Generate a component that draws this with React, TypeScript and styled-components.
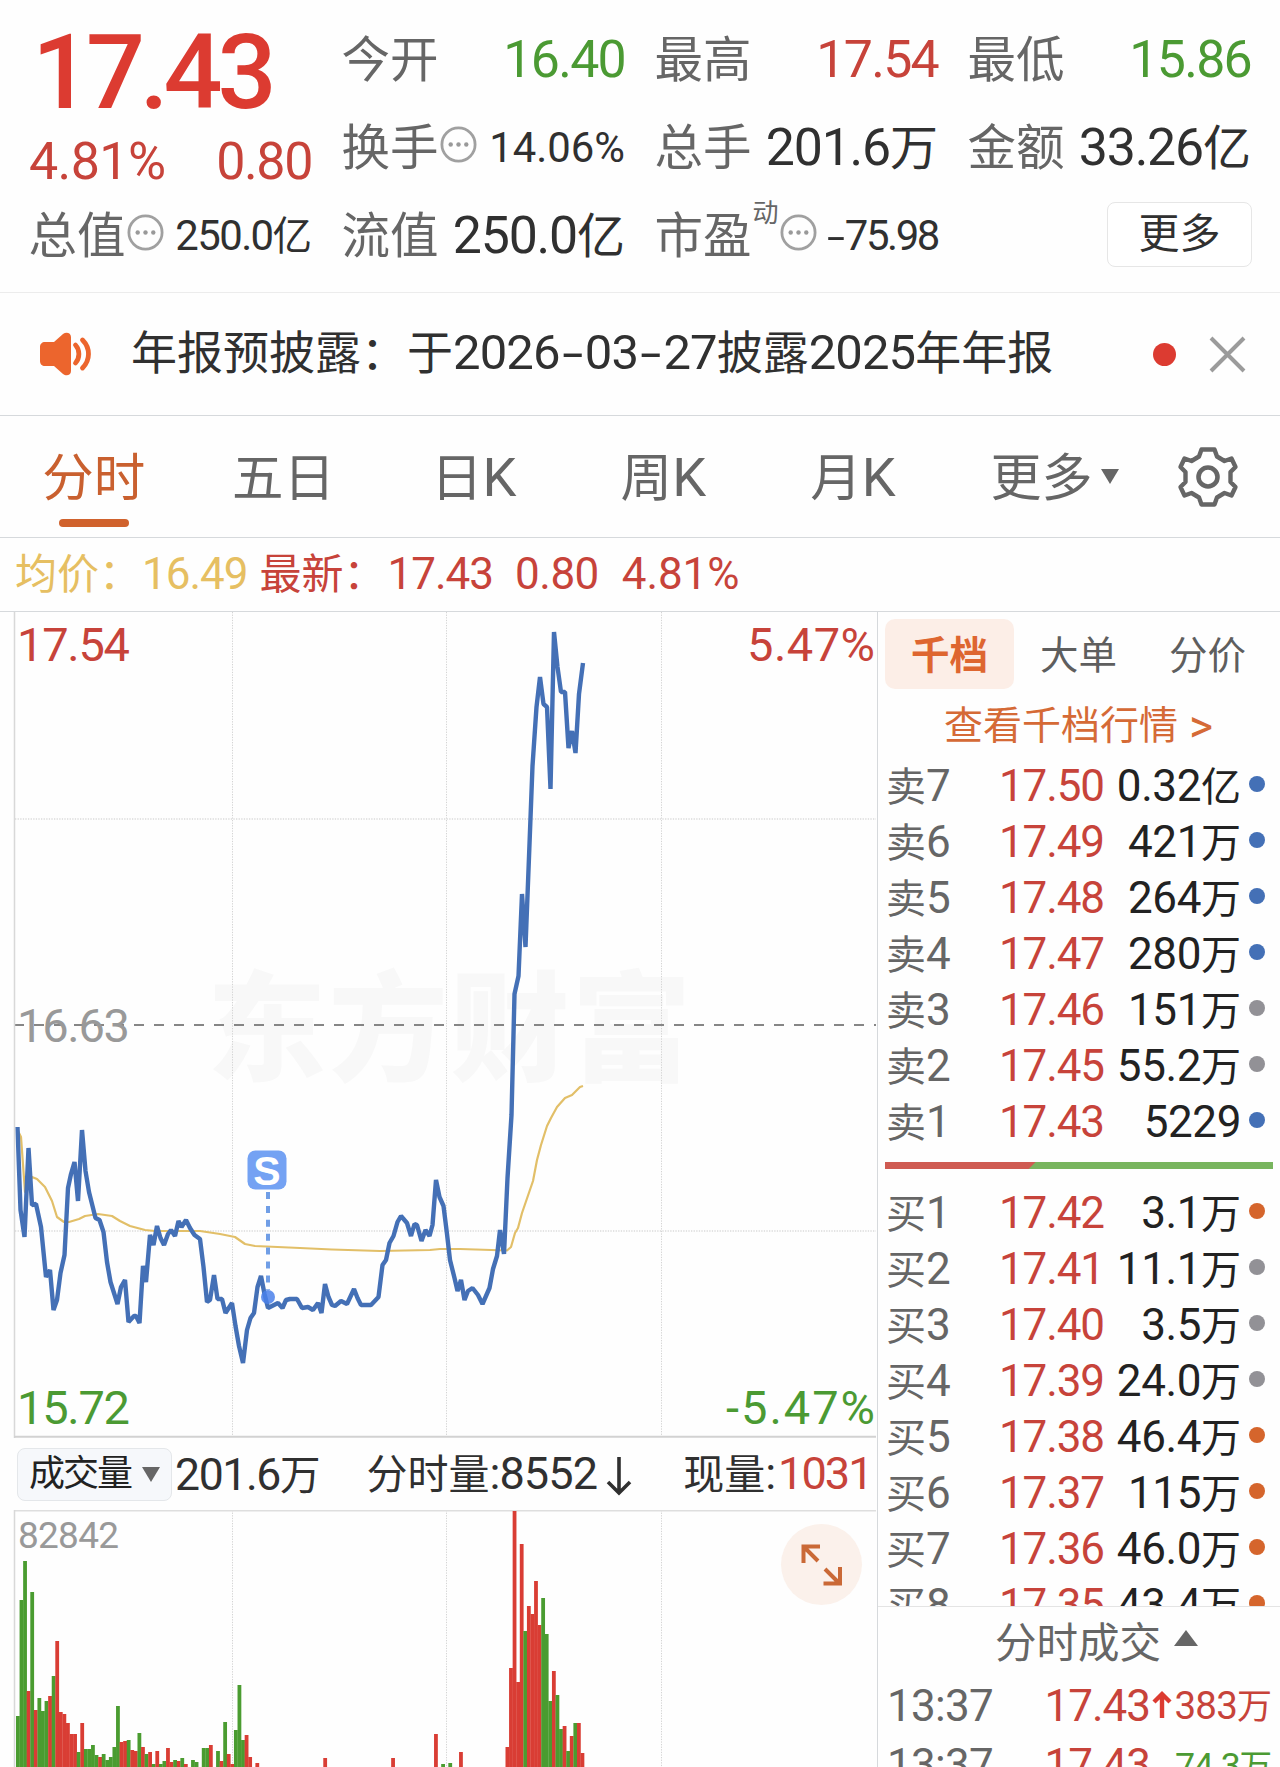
import React from "react";
import styled, { createGlobalStyle } from "styled-components";

const color = {
  red: "#c7433a",
  strongRed: "#dc3b31",
  green: "#4b9a33",
  orange: "#d0622d",
  yellow: "#e6bf62",
  blue: "#4470b6",
  grey: "#666666",
  light: "#999999",
  dark: "#303030",
  ink: "#222222",
  line: "#d6d9dc",
};

const GlobalStyle = createGlobalStyle`
  * { box-sizing: border-box; }
  body {
    margin: 0;
    background: #fefefe;
    overflow: hidden;
    font-family: Roboto, "Noto Sans CJK SC", sans-serif;
  }
`;

const Page = styled.div`
  width: 1280px;
  height: 1767px;
  overflow: hidden;
  display: flex;
  flex-direction: column;
  background: #fefefe;
`;

const Text = styled.span<{ $size: number; $color?: string; $spacing?: number; $left?: number }>`
  font-size: ${(p) => p.$size}px;
  line-height: 1.2;
  white-space: pre;
  color: ${(p) => p.$color ?? color.dark};
  letter-spacing: ${(p) => p.$spacing ?? 0}px;
  margin-left: ${(p) => p.$left ?? 0}px;
`;

const Latin = styled.span<{ $ratio: number; $tracking: number }>`
  font-size: ${(p) => p.$ratio}em;
  line-height: 1;
  letter-spacing: ${(p) => p.$tracking}px;
`;

const Hyphen = styled.span<{ $width: number }>`
  display: inline-block;
  width: ${(p) => p.$width}em;
  line-height: 1;
  letter-spacing: 0;
  text-align: center;
  transform: scaleX(1.65);
`;

type MixedProps = React.ComponentProps<typeof Text> & {
  value: string;
  ratio?: number;
  tracking?: number;
  hyphen?: number;
};

/** Chinese text whose figures and letters are set slightly larger than the ideographs. */
function Mixed({ value, ratio = 1.08, tracking = 0, hyphen = 0.54, ...rest }: MixedProps) {
  return (
    <Text {...rest}>
      {value.split(/([0-9A-Za-z.%:]+|-)/).map((part, i) => {
        if (part === "-") return <Hyphen key={i} $width={hyphen}>-</Hyphen>;
        if (i % 2) return <Latin key={i} $ratio={ratio} $tracking={tracking}>{part}</Latin>;
        return part;
      })}
    </Text>
  );
}

/* ---------- quote header ---------- */

const Header = styled.header`
  height: 293px;
  flex: none;
  display: grid;
  grid-template-columns: repeat(4, 282px);
  grid-template-rows: repeat(3, 88px);
  column-gap: 31px;
  padding: 14px 28px 14px 30px;
  border-bottom: 1px solid #ececec;
`;

const Cell = styled.div`
  display: flex;
  align-items: center;
  justify-content: space-between;
  padding-top: 6px;
`;

const Name = styled.div`
  display: flex;
  align-items: center;
  margin-left: -1.5px;
`;

const PriceCell = styled.div`
  grid-row: span 2;
  display: flex;
  flex-direction: column;
`;

const BigPrice = styled.div`
  height: 117px;
  padding-left: 2px;
  font-size: 104px;
  line-height: 117px;
  font-weight: 500;
  letter-spacing: -5.2px;
  color: ${color.strongRed};
`;

const ChangeRow = styled.div`
  display: flex;
  justify-content: space-between;
  align-items: center;
`;

const Superscript = styled.span`
  align-self: flex-start;
  margin: -10px 0 0 1px;
  font-size: 26px;
  line-height: 30px;
  color: ${color.grey};
`;

const MoreButton = styled.button`
  justify-self: end;
  align-self: center;
  width: 145px;
  height: 65px;
  margin-right: -1px;
  padding: 0;
  border: 1.5px solid #e6e6e6;
  border-radius: 8px;
  background: #fff;
  font: 41px/1 Roboto, "Noto Sans CJK SC", sans-serif;
  color: ${color.dark};
`;

const DotsSvg = styled.svg`
  margin: -10px 0 0 1px;
`;

function Dots() {
  return (
    <DotsSvg width="37" height="37" viewBox="0 0 37 37">
      <circle cx="18.5" cy="18.5" r="16.6" fill="none" stroke="#a0a0a0" strokeWidth="2.8" />
      <circle cx="10.7" cy="18.5" r="2.2" fill="#999" />
      <circle cx="18.5" cy="18.5" r="2.2" fill="#999" />
      <circle cx="26.3" cy="18.5" r="2.2" fill="#999" />
    </DotsSvg>
  );
}

interface StatProps {
  name: string;
  value: string;
  tone?: string;
  info?: boolean;
  sup?: string;
  tracking?: number;
}

function Stat({ name, value, tone = color.dark, info, sup, tracking = -1.2 }: StatProps) {
  return (
    <Cell>
      <Name>
        <Text $size={48.5} $color={color.grey}>{name}</Text>
        {sup && <Superscript>{sup}</Superscript>}
        {info && <Dots />}
      </Name>
      <Mixed
        value={value}
        ratio={info ? 1.06 : 1.08}
        tracking={tracking}
        hyphen={0.46}
        $size={info ? 39.5 : 48}
        $color={tone}
      />
    </Cell>
  );
}

/* ---------- notice ---------- */

const Notice = styled.div`
  height: 123px;
  flex: none;
  display: flex;
  align-items: center;
  padding: 0 34px 0 38px;
  border-bottom: 1.5px solid ${color.line};
`;

const NoticeText = styled.div`
  flex: 1;
  padding-left: 37px;
`;

const RedDot = styled.span`
  width: 23px;
  height: 23px;
  margin-right: 33px;
  border-radius: 50%;
  background: ${color.strongRed};
`;

/* ---------- period tabs ---------- */

const Tabs = styled.nav`
  height: 122px;
  flex: none;
  display: grid;
  grid-template-columns: repeat(5, 189.6px) 222px 1fr;
  border-bottom: 1.5px solid ${color.line};
`;

const Tab = styled.div<{ $active?: boolean }>`
  position: relative;
  display: flex;
  align-items: center;
  justify-content: center;
  padding: 5px 2px 0 0;
  &::after {
    content: "";
    display: ${(p) => (p.$active ? "block" : "none")};
    position: absolute;
    left: 59px;
    bottom: 10px;
    width: 70px;
    height: 8px;
    border-radius: 4px;
    background: ${color.orange};
  }
`;

const SettingsTab = styled.div`
  display: flex;
  align-items: center;
  padding-left: 6px;
`;

const Down = styled.i<{ $left: number; $lift?: number }>`
  margin-left: ${(p) => p.$left}px;
  margin-top: ${(p) => -(p.$lift ?? 0)}px;
  border: 9px solid transparent;
  border-bottom: 0;
  border-top: 15px solid ${color.grey};
`;

const Up = styled.i`
  margin: -12px 0 0 13px;
  border: 12px solid transparent;
  border-top: 0;
  border-bottom: 16px solid ${color.grey};
`;

/* ---------- average / latest ---------- */

const Summary = styled.div`
  height: 74px;
  flex: none;
  display: flex;
  align-items: baseline;
  padding: 10px 0 0 15px;
  border-bottom: 1.5px solid ${color.line};
`;

/* ---------- body ---------- */

const Body = styled.main`
  flex: 1;
  min-height: 0;
  display: flex;
`;

const Charts = styled.section`
  width: 878px;
  flex: none;
  border-right: 1.5px solid ${color.line};
  display: flex;
  flex-direction: column;
`;

const Plot = styled.svg`
  display: block;
  flex: none;
`;

const VolumeBar = styled.div`
  height: 72px;
  flex: none;
  display: flex;
  align-items: center;
  padding-left: 17px;
`;

const Figures = styled.div`
  display: flex;
  align-items: center;
  padding-top: 4px;
`;

const Chip = styled.div`
  width: 155px;
  height: 53px;
  display: flex;
  align-items: center;
  padding: 1px 0 0 11px;
  border: 1.5px solid #e4e7ea;
  border-radius: 8px;
  background: #f6f8fb;
`;

const VolumePane = styled.div`
  position: relative;
`;

const Expand = styled.button`
  position: absolute;
  left: 781px;
  top: 14px;
  width: 81px;
  height: 81px;
  padding: 0;
  border: 0;
  border-radius: 50%;
  background: #fbf1eb;
`;

const PRICE =
  "17.5,1127 20.5,1210 24.5,1237 28.5,1148 32,1205 36,1204 41,1227 46,1277 50,1270 53.5,1310 57,1300 60.5,1273 64.5,1255 68,1188 71,1174 74.5,1162 78,1201 82,1130 85.5,1171 89,1192 95.5,1218 99.5,1220 103.5,1232 107,1262 110.5,1282 117.5,1304 121,1287 125,1280 128.5,1322 134,1316 136,1316 139.5,1323 143,1266 146,1282 150,1235 153.5,1245 157,1226 160.5,1238 164,1245 168,1234 171,1230 175,1236 178.5,1221 181.5,1227 186,1220 190,1228 194.5,1235 200,1239 203.5,1267 207,1302 210,1300 214,1275 217.5,1299 222,1299 225.5,1313 232,1303 235.5,1326 239,1346 243,1363 247,1330 250.5,1318 254,1313 257.5,1287 261,1276 264.5,1294 268,1308 272,1306 278,1303 282.5,1308 286,1300 290,1299 297,1299 302,1308 308,1307 313,1310 318,1303 321.5,1313 325,1284 328.5,1297 332,1305 335,1306 341,1301 347,1304 354,1289 357.5,1298 361,1305 371,1305 378.5,1297 382.5,1265 386,1260 389.5,1243 393.5,1236 397.5,1222 401,1216 407,1223 411,1236 414.5,1224 417,1225 421.5,1241 425.5,1230 429.5,1236 432.5,1225 436,1180 439.5,1197 443.5,1206 447,1234 450,1260 454.5,1278 457.5,1291 461,1280 464.5,1300 468,1291 472.5,1288 478,1295 482.5,1304 489.5,1288 493,1269 497,1256 500,1230 504,1254 507.5,1178 511.5,1115 514.5,994 518.5,976 522,894 525.5,947 529,857 532.5,766 536.5,707 540,677 543.5,704 547,707 550.5,789 554,632 557.5,667 561,692 565,692 568.5,748 572,731 575.5,753 579,694 583,663";

const AVERAGE =
  "17.5,1130 21,1137 25,1192 32,1177 37,1179 45,1187 52,1201 57,1217 64,1222 69,1222 79,1219 85,1216 98,1214 112,1216 120,1221 130,1226 145,1230 155,1231 200,1231 220,1234 235,1237 245,1244 255,1246 300,1248 332,1249.5 380,1251 430,1250 440,1249 460,1249 507,1250.5 511,1247 515,1233 518,1228 522,1213 533,1181 537,1160 541,1145 547,1126 551,1118 557,1107 565,1098 572,1095 580,1087 583,1086";

/* one entry per minute: g = falling / r = rising, then the height above the bottom edge */
const OPENING =
  "g51 g167 g206 r76 g175 r57 g69 g56 g66 r71 g91 r126 r55 r53 r44 r33 r33 g15 r44 g18 g18 g22 g12 r10 g13 g7 g10 g20 g61 r25 r26 g27 r17 r16 g34 r20 g13 r15 g3 r16 g3 g6 r19 r5 g7 r6 g9 r3 - g7 g5 - g19 g19 r22 - g16 r6 g45 r13 r3 g37 g82 g27 r32 r10 - r4";
const SURGE =
  "r20 r99 r256 r85 r223 g136 r161 r153 r186 r142 g169 g133 g66 r96 g72 g38 r41 g16 r31 g44 r44 r14";

const expandBars = (source: string, start: number) =>
  source
    .split(" ")
    .map((s, i) => ({ slot: start + i, tone: s[0], height: Number(s.slice(1)) || 0 }))
    .filter((b) => b.height > 0);

const BARS = [
  ...expandBars(OPENING, 0),
  { slot: 86, tone: "r", height: 9 },
  { slot: 105, tone: "r", height: 9 },
  { slot: 117, tone: "r", height: 33 },
  { slot: 119, tone: "g", height: 3 },
  { slot: 121, tone: "g", height: 4 },
  { slot: 124, tone: "r", height: 15 },
  ...expandBars(SURGE, 137),
];

function GridLines({ top, bottom }: { top: number; bottom: number }) {
  return (
    <g stroke="#d4d4d4" strokeWidth="1" strokeDasharray="1.3 1.3">
      {[232.5, 446.5, 661.5].map((x) => (
        <line key={x} x1={x} x2={x} y1={top} y2={bottom} />
      ))}
    </g>
  );
}

function PriceChart() {
  return (
    <Plot width="877" height="826" viewBox="0 612 877 826" fontFamily="Roboto, sans-serif" fontSize="47">
      <text
        x="207"
        y="1072"
        fontSize="119"
        fontWeight="900"
        fontFamily='"Noto Sans CJK SC", sans-serif'
        fill="#f8f8f8"
        textLength="484"
      >
        东方财富
      </text>
      <GridLines top={612} bottom={1437} />
      <g stroke="#dadada" strokeWidth="1.5" strokeDasharray="1.3 1.3">
        <line x1="15" x2="876" y1="819" y2="819" />
        <line x1="15" x2="876" y1="1231" y2="1231" />
      </g>
      <line x1="14" x2="876" y1="1025" y2="1025" stroke="#868686" strokeWidth="2" strokeDasharray="10 10" />
      <text x="17" y="1042" fill={color.light} textLength="113">16.63</text>
      <polyline points={AVERAGE} fill="none" stroke="#e2bf68" strokeWidth="2.2" strokeLinejoin="round" />
      <polyline points={PRICE} fill="none" stroke={color.blue} strokeWidth="4.4" strokeLinejoin="bevel" />
      <line x1="268" x2="268" y1="1192" y2="1290" stroke="#709ee6" strokeWidth="4" strokeDasharray="7 6.9" />
      <circle cx="268" cy="1297" r="7" fill="#4a80ea" opacity="0.85" />
      <rect x="247.5" y="1150.5" width="39" height="39" rx="8" fill="#74a2f3" />
      <text x="267" y="1185" fontSize="41" fontWeight="700" fill="#fff" textAnchor="middle" fontFamily='"Liberation Sans", sans-serif'>
        S
      </text>
      <text x="17" y="661" fill={color.red} textLength="113">17.54</text>
      <text x="747" y="661" fill={color.red} textLength="128">5.47%</text>
      <text x="17" y="1424" fill={color.green} textLength="113">15.72</text>
      <text x="726" y="1424" fill={color.green} textLength="149">-5.47%</text>
      <line x1="14.5" x2="14.5" y1="612" y2="1438" stroke="#d8d8d8" strokeWidth="1.5" />
      <line x1="14" x2="876" y1="1436.8" y2="1436.8" stroke="#d2d2d2" strokeWidth="2" />
    </Plot>
  );
}

function VolumeChart() {
  return (
    <Plot width="877" height="257" viewBox="0 0 877 257" fontFamily="Roboto, sans-serif">
      <GridLines top={0} bottom={257} />
      <line x1="14" x2="876" y1="0.7" y2="0.7" stroke="#dedede" strokeWidth="1.4" />
      <line x1="14.5" x2="14.5" y1="0" y2="257" stroke="#d8d8d8" strokeWidth="1.5" />
      <text x="18" y="38" fontSize="37" fill={color.light} textLength="101">82842</text>
      {BARS.map((b) => (
        <rect
          key={b.slot}
          x={16 + b.slot * 3.573}
          y={257 - b.height}
          width="3.8"
          height={b.height}
          fill={b.tone === "g" ? "#4a9c30" : "#d93d34"}
        />
      ))}
    </Plot>
  );
}

/* ---------- order book ---------- */

const Side = styled.aside`
  flex: 1;
  min-width: 0;
  display: flex;
  flex-direction: column;
`;

const SideTabs = styled.div`
  height: 77px;
  flex: none;
  display: flex;
  align-items: flex-start;
  padding: 7px 0 0 7px;
`;

const SideTab = styled.div<{ $active?: boolean }>`
  width: 129px;
  height: 70px;
  display: flex;
  align-items: center;
  justify-content: center;
  padding-top: 4px;
  border-radius: 10px;
  font-size: 38.5px;
  line-height: 1;
  font-weight: ${(p) => (p.$active ? 700 : 400)};
  color: ${(p) => (p.$active ? "#de6630" : "#5e5e5e")};
  background: ${(p) => (p.$active ? "#fceee7" : "transparent")};
`;

const DepthLink = styled.div`
  height: 67px;
  flex: none;
  display: flex;
  align-items: center;
  padding: 8px 0 0 66px;
`;

const Book = styled.div`
  height: 851px;
  flex: none;
  overflow: hidden;
  border-bottom: 1.5px solid #e4e4e4;
`;

const BookRow = styled.div`
  height: 56px;
  display: grid;
  grid-template-columns: 96px 122px 1fr 16px;
  align-items: center;
  padding: 0 15px 0 8px;
`;

const BookText = styled.div<{ $end?: boolean; $gap?: number }>`
  display: flex;
  justify-content: ${(p) => (p.$end ? "flex-end" : "flex-start")};
  padding: 7px ${(p) => p.$gap ?? 0}px 0 0;
`;

const Dot = styled.span<{ $tone: string }>`
  width: 16px;
  height: 16px;
  border-radius: 50%;
  background: ${(p) => p.$tone};
`;

const Ratio = styled.div`
  height: 7px;
  margin: 14px 7px;
  background: linear-gradient(135deg, #cf5b52 0 106px, #78b55e 107px);
`;

const B = color.blue;
const G = "#929196";
const O = "#d5652c";

type LevelRow = [name: string, price: string, amount: string, tone: string];

const SELLS: LevelRow[] = [
  ["卖7", "17.50", "0.32亿", B],
  ["卖6", "17.49", "421万", B],
  ["卖5", "17.48", "264万", B],
  ["卖4", "17.47", "280万", B],
  ["卖3", "17.46", "151万", G],
  ["卖2", "17.45", "55.2万", G],
  ["卖1", "17.43", "5229", B],
];

const BUYS: LevelRow[] = [
  ["买1", "17.42", "3.1万", O],
  ["买2", "17.41", "11.1万", G],
  ["买3", "17.40", "3.5万", G],
  ["买4", "17.39", "24.0万", G],
  ["买5", "17.38", "46.4万", O],
  ["买6", "17.37", "115万", O],
  ["买7", "17.36", "46.0万", O],
  ["买8", "17.35", "43.4万", O],
];

function Level({ row: [name, price, amount, tone] }: { row: LevelRow }) {
  return (
    <BookRow>
      <BookText>
        <Mixed value={name} ratio={1.1} $size={40} $color={color.grey} />
      </BookText>
      <BookText $end>
        <Mixed value={price} ratio={1.1} tracking={-1.1} $size={40} $color={color.red} />
      </BookText>
      <BookText $end $gap={8}>
        <Mixed value={amount} ratio={1.1} tracking={-0.4} $size={40} $color={color.ink} />
      </BookText>
      <Dot $tone={tone} />
    </BookRow>
  );
}

const TradesTitle = styled.div`
  height: 67px;
  flex: none;
  display: flex;
  align-items: center;
  padding: 6px 0 0 117px;
`;

const Trade = styled.div`
  height: 59px;
  flex: none;
  display: grid;
  grid-template-columns: 143px 120px 22px 1fr;
  align-items: center;
  padding: 0 8px 0 9px;
`;

const TradeText = styled.div<{ $end?: boolean; $drop?: number }>`
  display: flex;
  min-width: 0;
  justify-content: ${(p) => (p.$end ? "flex-end" : "flex-start")};
  padding-top: ${(p) => p.$drop ?? 5}px;
`;

function TickUp() {
  return (
    <svg width="22" height="30" viewBox="0 0 22 30">
      <path d="M12 29V5M4 13l8-8 8 8" fill="none" stroke={color.strongRed} strokeWidth="4.4" />
    </svg>
  );
}

function TradeRow({ amount, tone, up }: { amount: string; tone: string; up?: boolean }) {
  return (
    <Trade>
      <TradeText>
        <Text $size={44} $color={color.grey} $spacing={-0.7}>13:37</Text>
      </TradeText>
      <TradeText $end>
        <Text $size={44} $color={color.red} $spacing={-1}>17.43</Text>
      </TradeText>
      {up ? <TickUp /> : <span />}
      <TradeText $end $drop={9}>
        <Mixed
          value={amount}
          ratio={1.1}
          tracking={up ? -0.8 : -1.3}
          $size={up ? 35 : 32.5}
          $color={tone}
        />
      </TradeText>
    </Trade>
  );
}

export default function App() {
  return (
    <>
      <GlobalStyle />
      <Page>
        <Header>
          <PriceCell>
            <BigPrice>17.43</BigPrice>
            <ChangeRow>
              <Text $size={52} $color={color.red} $spacing={-0.6} $left={-1}>4.81%</Text>
              <Text $size={52} $color={color.red} $spacing={-1.4}>0.80</Text>
            </ChangeRow>
          </PriceCell>
          <Stat name="今开" value="16.40" tone={color.green} tracking={-1.7} />
          <Stat name="最高" value="17.54" tone={color.red} tracking={-1.7} />
          <Stat name="最低" value="15.86" tone={color.green} tracking={-1.7} />
          <Stat name="换手" value="14.06%" info tracking={0} />
          <Stat name="总手" value="201.6万" />
          <Stat name="金额" value="33.26亿" />
          <Stat name="总值" value="250.0亿" info tracking={-1.6} />
          <Stat name="流值" value="250.0亿" />
          <Stat name="市盈" value="-75.98" info sup="动" tracking={-2.4} />
          <MoreButton>更多</MoreButton>
        </Header>

        <Notice>
          <svg width="56" height="46" viewBox="0 0 56 46">
            <path
              d="M7 11h9L25 3c3-2.500 8-1.500 8 3v34c0 4.500-5 5.500-8 3L16 35H7c-3 0-5-2-5-5V16c0-3 2-5 5-5z"
              fill="#ec652d"
            />
            <path d="M37.500 14c4.500 5 4.500 13 0 18M44.500 9c8 8 8 20 0 28" fill="none" stroke="#ec652d" strokeWidth="4.800" strokeLinecap="round" />
          </svg>
          <NoticeText>
            <Mixed value="年报预披露：于2026-03-27披露2025年年报" ratio={1.065} tracking={-0.9} hyphen={0.55} $size={46} />
          </NoticeText>
          <RedDot />
          <svg width="37" height="37" viewBox="0 0 37 37">
            <path d="M2 2l33 33M35 2L2 35" stroke="#9b9b9b" strokeWidth="4" fill="none" />
          </svg>
        </Notice>

        <Tabs>
          <Tab $active>
            <Text $size={51.5} $color="#c9602f">分时</Text>
          </Tab>
          {["五日", "日K", "周K", "月K"].map((t) => (
            <Tab key={t}>
              <Mixed value={t} ratio={1.05} tracking={-1.5} $size={51.5} $color={color.grey} />
            </Tab>
          ))}
          <Tab>
            <Text $size={51} $color={color.grey} $left={-6}>更多</Text>
            <Down $left={9} $lift={5} />
          </Tab>
          <SettingsTab>
            <svg width="64" height="64" viewBox="-32 -32 64 64">
              <path
                d="M-6.500-27.500H6.500L9-20.500 16.500-16 23.500-18.500 27.500-10 22.500-5V5L27.500 10 23.500 18.500 16.500 16 9 20.500 6.500 27.500H-6.500L-9 20.500-16.500 16-23.500 18.500-27.500 10-22.500 5V-5L-27.500-10-23.500-18.500-16.500-16-9-20.500z"
                fill="none"
                stroke={color.grey}
                strokeWidth="4.400"
                strokeLinejoin="round"
              />
              <circle r="9.500" fill="none" stroke={color.grey} strokeWidth="4.600" />
            </svg>
          </SettingsTab>
        </Tabs>

        <Summary>
          <Text $size={42} $color={color.yellow}>均价：</Text>
          <Text $size={44} $color={color.yellow} $spacing={-1} $left={1}>16.49</Text>
          <Text $size={42} $color={color.red} $left={12}>最新：</Text>
          <Text $size={44} $color={color.red} $spacing={-1} $left={2}>17.43</Text>
          <Text $size={44} $color={color.red} $spacing={-0.5} $left={22}>0.80</Text>
          <Text $size={44} $color={color.red} $spacing={-0.1} $left={23}>4.81%</Text>
        </Summary>

        <Body>
          <Charts>
            <PriceChart />
            <VolumeBar>
              <Chip>
                <Text $size={36} $color={color.ink} $spacing={-2}>成交量</Text>
                <Down $left={11} $lift={1} />
              </Chip>
              <Figures>
                <Mixed value="201.6万" ratio={1.1} tracking={-1.4} $size={40.5} $left={3} />
                <Mixed value="分时量:8552" ratio={1.1} tracking={-0.9} $size={41} $left={46} />
                <svg width="36" height="42" viewBox="0 0 36 42">
                  <path d="M22 2v36M11 27l11 11 11-11" fill="none" stroke={color.dark} strokeWidth="3.600" />
                </svg>
                <Mixed value="现量:" ratio={1.1} $size={41} $left={50} />
                <Mixed value="1031" ratio={1.1} tracking={-2} $size={41} $color={color.red} $left={2} />
              </Figures>
            </VolumeBar>
            <VolumePane>
              <VolumeChart />
              <Expand>
                <svg width="81" height="81" viewBox="0 0 81 81">
                  <path d="M22.500 39V22.500H39M23 23l14 14M59 43v16.500H42.500M58 59L44 45" fill="none" stroke="#ca6936" strokeWidth="4" />
                </svg>
              </Expand>
            </VolumePane>
          </Charts>

          <Side>
            <SideTabs>
              <SideTab $active>千档</SideTab>
              <SideTab>大单</SideTab>
              <SideTab>分价</SideTab>
            </SideTabs>
            <DepthLink>
              <Text $size={39} $color="#d56a36">查看千档行情</Text>
              <Text $size={46} $color="#d56a36" $left={11}>&gt;</Text>
            </DepthLink>
            <Book>
              {SELLS.map((r) => (
                <Level key={r[0]} row={r} />
              ))}
              <Ratio />
              {BUYS.map((r) => (
                <Level key={r[0]} row={r} />
              ))}
            </Book>
            <TradesTitle>
              <Text $size={41.5} $color={color.grey}>分时成交</Text>
              <Up />
            </TradesTitle>
            <TradeRow amount="383万" tone={color.red} up />
            <TradeRow amount="74.3万" tone={color.green} />
          </Side>
        </Body>
      </Page>
    </>
  );
}
